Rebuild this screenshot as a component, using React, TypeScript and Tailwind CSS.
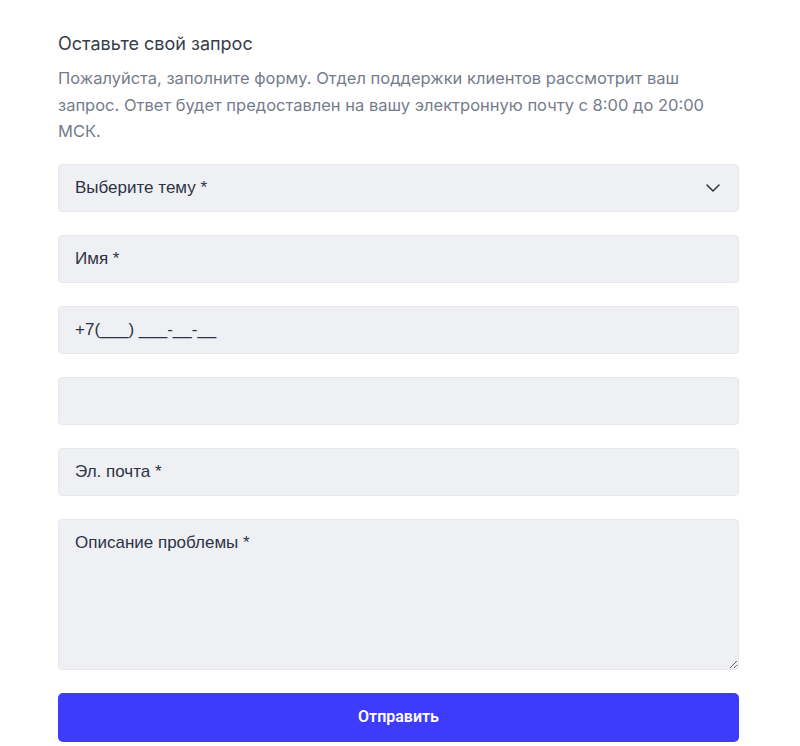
import { useState } from "react";
import { ChevronDown } from "lucide-react";

const fieldCls =
  "w-full h-[48px] px-4 rounded-[4px] bg-[#eff0f4] border border-[#e6e8ec] text-[17px] text-[#2d3344] placeholder:text-[#2d3344] outline-none font-['Liberation_Sans',Arial,sans-serif]";

export default function App() {
  const [topic, setTopic] = useState("");
  const [name, setName] = useState("");
  const [phone, setPhone] = useState("");
  const [extra, setExtra] = useState("");
  const [email, setEmail] = useState("");
  const [text, setText] = useState("");

  return (
    <div className="min-h-screen bg-white font-['Inter',sans-serif]">
      <form
        className="w-[681px] ml-[58px] pt-[31px] flex flex-col"
        onSubmit={(e) => e.preventDefault()}
      >
        {/* --- Header --- */}
        <h2 className="text-[18px] leading-[26px] text-[#373d49]">
          Оставьте свой запрос
        </h2>
        <p className="mt-[8px] text-[16.5px] leading-[26.5px] text-[#757c8b]">
          Пожалуйста, заполните форму. Отдел поддержки клиентов рассмотрит ваш
          запрос. Ответ будет предоставлен на вашу электронную почту с 8:00 до 20:00
          МСК.
        </p>

        {/* --- Fields --- */}
        <div className="mt-[19px] flex flex-col gap-[23px]">
          <div className="relative">
            <select
              value={topic}
              onChange={(e) => setTopic(e.target.value)}
              className={fieldCls + " appearance-none pr-10"}
            >
              <option value="">Выберите тему *</option>
              <option value="1">Техническая проблема</option>
              <option value="2">Оплата</option>
            </select>
            <ChevronDown
              size={24}
              strokeWidth={1.5}
              className="absolute right-[14px] top-1/2 -translate-y-1/2 text-[#2d3344] pointer-events-none"
            />
          </div>
          <input
            className={fieldCls}
            placeholder="Имя *"
            value={name}
            onChange={(e) => setName(e.target.value)}
          />
          <input
            className={fieldCls}
            placeholder="+7(___) ___-__-__"
            value={phone}
            onChange={(e) => setPhone(e.target.value)}
          />
          <input
            className={fieldCls}
            value={extra}
            onChange={(e) => setExtra(e.target.value)}
          />
          <input
            className={fieldCls}
            placeholder="Эл. почта *"
            value={email}
            onChange={(e) => setEmail(e.target.value)}
          />
          <textarea
            className={fieldCls + " h-[151px] py-[11px] leading-[24px] resize-y"}
            placeholder="Описание проблемы *"
            value={text}
            onChange={(e) => setText(e.target.value)}
          />
          <button
            type="submit"
            className="h-[49px] rounded-[5px] bg-[#3f3bfd] text-white text-[16px] font-semibold font-['Roboto',sans-serif]"
          >
            Отправить
          </button>
        </div>
      </form>
    </div>
  );
}
